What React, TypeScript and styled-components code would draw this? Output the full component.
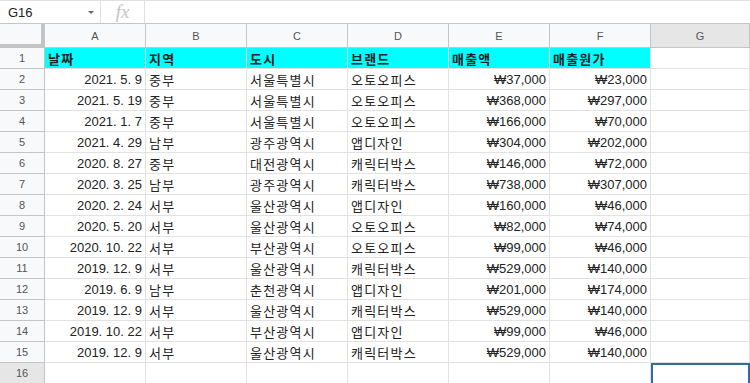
import React from "react";
import styled, { createGlobalStyle, css } from "styled-components";

const Global = createGlobalStyle`
  html, body { margin: 0; padding: 0; background: #fff; overflow: hidden; }
  body { font-family: "Liberation Sans", "Noto Sans CJK KR", Arial, sans-serif; }
`;

const Page = styled.div`
  width: 750px;
  height: 383px;
  overflow: hidden;
  background: #fff;
`;

const FormulaBar = styled.div`
  display: flex;
  align-items: center;
  height: 24px;
  box-sizing: border-box;
  border-top: 1px solid #e0e0e0;
  border-bottom: 1px solid #c4c4c4;
`;

const NameBox = styled.div`
  display: flex;
  align-items: center;
  justify-content: space-between;
  width: 101px;
  height: 100%;
  box-sizing: border-box;
  padding: 0 6px 0 8px;
  border-right: 1px solid #e0e0e0;
  font-size: 13px;
  color: #222;
`;

const Caret = styled.span`
  width: 0;
  height: 0;
  border-left: 3px solid transparent;
  border-right: 3px solid transparent;
  border-top: 3px solid #666;
`;

const Fx = styled.div`
  width: 44px;
  height: 100%;
  box-sizing: border-box;
  border-right: 1px solid #e0e0e0;
  display: flex;
  align-items: center;
  justify-content: center;
  font-family: "Liberation Serif", serif;
  font-style: italic;
  font-size: 19px;
  color: #c4c4c4;
`;

const Grid = styled.div`
  display: grid;
  grid-template-columns: 45px repeat(6, 101px) 1fr;
  grid-template-rows: 24px repeat(15, 21px) 30px;
`;

const ColHead = styled.div<{ $active?: boolean }>`
  background: ${(p) => (p.$active ? "#e6e6e6" : "#f8f9fa")};
  border-right: 1px solid #c4c4c4;
  border-bottom: 1px solid #c4c4c4;
  box-sizing: border-box;
  display: flex;
  align-items: center;
  justify-content: center;
  font-size: 11px;
  color: #555;
`;

const Corner = styled.div`
  background: #f8f9fa;
  box-sizing: border-box;
  border-right: 4px solid #c4c4c4;
  border-bottom: 4px solid #c4c4c4;
`;

const RowHead = styled.div<{ $active?: boolean }>`
  background: ${(p) => (p.$active ? "#e6e6e6" : "#f8f9fa")};
  border-right: 1px solid #c4c4c4;
  border-bottom: 1px solid #c4c4c4;
  box-sizing: border-box;
  display: flex;
  align-items: ${(p) => (p.$active ? "flex-start" : "center")};
  padding-top: ${(p) => (p.$active ? "4px" : "0")};
  justify-content: center;
  font-size: 11px;
  color: #555;
`;

const Cell = styled.div<{ $right?: boolean; $head?: boolean; $selected?: boolean }>`
  box-sizing: border-box;
  border-right: 1px solid #e2e2e2;
  border-bottom: 1px solid #e2e2e2;
  padding: 0 3px;
  display: flex;
  align-items: center;
  justify-content: ${(p) => (p.$right ? "flex-end" : "flex-start")};
  font-size: 13px;
  letter-spacing: ${(p) => (p.$right ? "0" : "1.2px")};
  color: #222;
  white-space: nowrap;
  overflow: hidden;
  ${(p) =>
    p.$head &&
    css`
      background: #00ffff;
      font-weight: bold;
    `}
  ${(p) =>
    p.$selected &&
    css`
      border: 2px solid #2e6da4;
      border-bottom: none;
    `}
`;

const header = ["날짜", "지역", "도시", "브랜드", "매출액", "매출원가"];

const data: string[][] = [
  ["2021. 5. 9", "중부", "서울특별시", "오토오피스", "₩37,000", "₩23,000"],
  ["2021. 5. 19", "중부", "서울특별시", "오토오피스", "₩368,000", "₩297,000"],
  ["2021. 1. 7", "중부", "서울특별시", "오토오피스", "₩166,000", "₩70,000"],
  ["2021. 4. 29", "남부", "광주광역시", "앱디자인", "₩304,000", "₩202,000"],
  ["2020. 8. 27", "중부", "대전광역시", "캐릭터박스", "₩146,000", "₩72,000"],
  ["2020. 3. 25", "남부", "광주광역시", "캐릭터박스", "₩738,000", "₩307,000"],
  ["2020. 2. 24", "서부", "울산광역시", "앱디자인", "₩160,000", "₩46,000"],
  ["2020. 5. 20", "서부", "울산광역시", "오토오피스", "₩82,000", "₩74,000"],
  ["2020. 10. 22", "서부", "부산광역시", "오토오피스", "₩99,000", "₩46,000"],
  ["2019. 12. 9", "서부", "울산광역시", "캐릭터박스", "₩529,000", "₩140,000"],
  ["2019. 6. 9", "남부", "춘천광역시", "앱디자인", "₩201,000", "₩174,000"],
  ["2019. 12. 9", "서부", "울산광역시", "캐릭터박스", "₩529,000", "₩140,000"],
  ["2019. 10. 22", "서부", "부산광역시", "앱디자인", "₩99,000", "₩46,000"],
  ["2019. 12. 9", "서부", "울산광역시", "캐릭터박스", "₩529,000", "₩140,000"],
];

const cols = ["A", "B", "C", "D", "E", "F", "G"];
const rightCols = new Set([0, 4, 5]);

export default function App() {
  return (
    <Page>
      <Global />
      <FormulaBar>
        <NameBox>
          <span>G16</span>
          <Caret />
        </NameBox>
        <Fx>fx</Fx>
      </FormulaBar>
      <Grid>
        <Corner />
        {cols.map((c) => (
          <ColHead key={c} $active={c === "G"}>
            {c}
          </ColHead>
        ))}
        <RowHead>1</RowHead>
        {header.map((h) => (
          <Cell key={h} $head>
            {h}
          </Cell>
        ))}
        <Cell />
        {data.map((row, i) => (
          <React.Fragment key={i}>
            <RowHead>{i + 2}</RowHead>
            {row.map((v, j) => (
              <Cell key={j} $right={rightCols.has(j)}>
                {v}
              </Cell>
            ))}
            <Cell />
          </React.Fragment>
        ))}
        <RowHead $active>16</RowHead>
        {cols.map((c) => (
          <Cell key={c} $selected={c === "G"} />
        ))}
      </Grid>
    </Page>
  );
}
